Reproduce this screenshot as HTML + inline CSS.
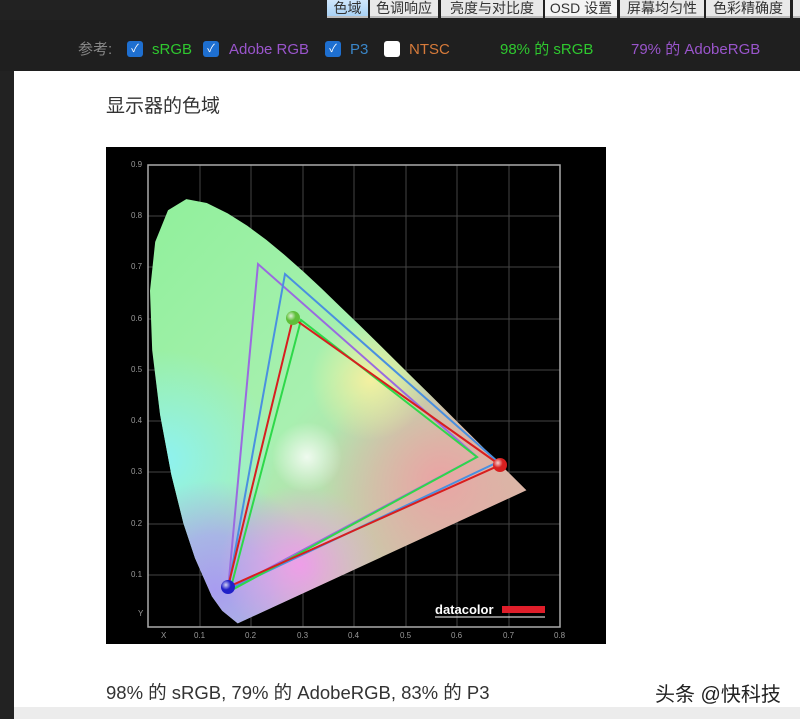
<!DOCTYPE html>
<html><head><meta charset="utf-8"><style>
*{margin:0;padding:0;box-sizing:border-box}
body{width:800px;height:719px;overflow:hidden;background:#222;font-family:"Liberation Sans","Noto Sans CJK SC",sans-serif;position:relative}
.tab{position:absolute;top:0;height:18px;background:#e9e9e9;color:#333;font-size:14px;line-height:16px;text-align:center;border-bottom:2px solid #bbb;overflow:hidden}
.row{position:absolute;top:40px;font-size:15px;line-height:20px}
.cb{position:absolute;top:41px;width:16px;height:16px;border-radius:3px;background:#1e6fd0;color:#fff;font-size:11px;text-align:center;line-height:16px}
.panel{position:absolute;left:14px;top:71px;width:786px;height:636px;background:#fff}
</style></head><body>
<div style="position:absolute;left:0;top:20px;width:800px;height:51px;background:#1f1f1f"></div>
<div class="tab" style="left:327px;width:41px;background:linear-gradient(#cfe6fb,#a9d2f5)">色域</div>
<div class="tab" style="left:370px;width:68px">色调响应</div>
<div class="tab" style="left:441px;width:102px">亮度与对比度</div>
<div class="tab" style="left:545px;width:72px;background:#f4f4f4">OSD 设置</div>
<div class="tab" style="left:620px;width:84px">屏幕均匀性</div>
<div class="tab" style="left:706px;width:84px">色彩精确度</div>
<div class="tab" style="left:793px;width:10px"></div>
<div class="row" style="left:78px;color:#888">参考:</div>
<div class="cb" style="left:127px">✓</div><div class="row" style="left:152px;color:#2fc82f">sRGB</div>
<div class="cb" style="left:203px">✓</div><div class="row" style="left:229px;color:#9a55cc">Adobe RGB</div>
<div class="cb" style="left:325px">✓</div><div class="row" style="left:350px;color:#3a86c8">P3</div>
<div class="cb" style="left:384px;background:#fff"></div><div class="row" style="left:409px;color:#d67a3a">NTSC</div>
<div class="row" style="left:500px;color:#2fc82f">98% 的 sRGB</div>
<div class="row" style="left:631px;color:#9a55cc">79% 的 AdobeRGB</div>
<div class="panel"></div>
<div style="position:absolute;left:106px;top:91px;font-size:19px;color:#333">显示器的色域</div>
<svg style="position:absolute;left:0;top:0" width="800" height="719">
<defs>
<clipPath id="cl"><path d="M237.7,623.4 L222.2,610.8 211.9,596.4 195,558.1 183.4,523.2 171.4,475 160.1,414.7 152.2,350.3 150,290.7 155.2,241.9 168,210.3 186.3,199.1 206.8,203 227.7,213.4 247.3,225.8 266.2,239.8 284.9,255.2 303.3,271.5 321.7,288.6 340.1,306.5 358.5,324.1 376.7,342 394.6,359.7 411.9,376.9 428.6,393.3 444.2,408.8 458.5,423 470.9,435.3 481.8,446.1 490.9,455 504.1,468.2 526.4,490.2 Z"/></clipPath>
<linearGradient id="base" x1="0" y1="0" x2="1" y2="1"><stop offset="0" stop-color="#8ff09a"/><stop offset="0.45" stop-color="#a8f0b0"/><stop offset="1" stop-color="#eaa4a4"/></linearGradient>
<radialGradient id="cy" cx="165" cy="460" r="110" gradientUnits="userSpaceOnUse"><stop offset="0" stop-color="#8ef2f0"/><stop offset="1" stop-color="#8ef2f0" stop-opacity="0"/></radialGradient>
<radialGradient id="bl" cx="215" cy="590" r="110" gradientUnits="userSpaceOnUse"><stop offset="0" stop-color="#a89cf0"/><stop offset="0.5" stop-color="#a8a8f0" stop-opacity=".8"/><stop offset="1" stop-color="#a8a8f0" stop-opacity="0"/></radialGradient>
<radialGradient id="mg" cx="300" cy="565" r="80" gradientUnits="userSpaceOnUse"><stop offset="0" stop-color="#ee9ee8"/><stop offset="1" stop-color="#ee9ee8" stop-opacity="0"/></radialGradient>
<radialGradient id="rd" cx="440" cy="480" r="120" gradientUnits="userSpaceOnUse"><stop offset="0" stop-color="#eaa4a4"/><stop offset="1" stop-color="#eaa4a4" stop-opacity="0"/></radialGradient>
<radialGradient id="ye" cx="370" cy="380" r="60" gradientUnits="userSpaceOnUse"><stop offset="0" stop-color="#f4f0a0"/><stop offset="1" stop-color="#f4f0a0" stop-opacity="0"/></radialGradient>
<radialGradient id="wh" cx="307" cy="457" r="35" gradientUnits="userSpaceOnUse"><stop offset="0" stop-color="#fff" stop-opacity=".8"/><stop offset="1" stop-color="#fff" stop-opacity="0"/></radialGradient>
<radialGradient id="ball" cx=".35" cy=".35" r=".7"><stop offset="0" stop-color="#fff" stop-opacity=".8"/><stop offset=".5" stop-color="#fff" stop-opacity="0"/></radialGradient>
</defs>
<rect x="106" y="147" width="500" height="497" fill="#000"/>
<g stroke="#444" stroke-width="1">
<line x1="200" y1="165" x2="200" y2="627"/><line x1="251" y1="165" x2="251" y2="627"/><line x1="303" y1="165" x2="303" y2="627"/><line x1="354" y1="165" x2="354" y2="627"/><line x1="406" y1="165" x2="406" y2="627"/><line x1="457" y1="165" x2="457" y2="627"/><line x1="509" y1="165" x2="509" y2="627"/>
<line x1="148" y1="216" x2="560" y2="216"/><line x1="148" y1="267" x2="560" y2="267"/><line x1="148" y1="319" x2="560" y2="319"/><line x1="148" y1="370" x2="560" y2="370"/><line x1="148" y1="421" x2="560" y2="421"/><line x1="148" y1="472" x2="560" y2="472"/><line x1="148" y1="524" x2="560" y2="524"/><line x1="148" y1="575" x2="560" y2="575"/>
</g>
<rect x="148" y="165" width="412" height="462" fill="none" stroke="#aaa" stroke-width="1.5"/>
<g fill="#999" font-size="8" font-family="Liberation Sans">
<text x="131" y="167">0.9</text><text x="131" y="218">0.8</text><text x="131" y="269">0.7</text><text x="131" y="321">0.6</text><text x="131" y="372">0.5</text><text x="131" y="423">0.4</text><text x="131" y="474">0.3</text><text x="131" y="526">0.2</text><text x="131" y="577">0.1</text><text x="138" y="616">Y</text>
<text x="161" y="638">X</text><text x="194" y="638">0.1</text><text x="245" y="638">0.2</text><text x="297" y="638">0.3</text><text x="348" y="638">0.4</text><text x="400" y="638">0.5</text><text x="451" y="638">0.6</text><text x="503" y="638">0.7</text><text x="554" y="638">0.8</text>
</g>
<g clip-path="url(#cl)">
<rect x="140" y="190" width="400" height="440" fill="url(#base)"/>
<rect x="140" y="190" width="400" height="440" fill="url(#cy)"/>
<rect x="140" y="190" width="400" height="440" fill="url(#rd)"/>
<rect x="140" y="190" width="400" height="440" fill="url(#bl)"/>
<rect x="140" y="190" width="400" height="440" fill="url(#mg)"/>
<rect x="140" y="190" width="400" height="440" fill="url(#ye)"/>
<rect x="140" y="190" width="400" height="440" fill="url(#wh)"/>
</g>
<g fill="none" stroke-width="2">
<polygon points="477,457 258,264 228,590" stroke="#9a6ae0"/>
<polygon points="498,462 285,274 228,590" stroke="#4a90e0"/>
<polygon points="477,457 301,320 230,591" stroke="#2ed84a"/>
<polygon points="500,465 293,318 228,587" stroke="#d81e1e"/>
</g>
<circle cx="293" cy="318" r="7" fill="#5fbf3a"/><circle cx="293" cy="318" r="7" fill="url(#ball)"/>
<circle cx="500" cy="465" r="7" fill="#d82020"/><circle cx="500" cy="465" r="7" fill="url(#ball)"/>
<circle cx="228" cy="587" r="7" fill="#2020c8"/><circle cx="228" cy="587" r="7" fill="url(#ball)"/>
<text x="435" y="614" fill="#fff" font-size="13" font-weight="bold" font-family="Liberation Sans">datacolor</text>
<rect x="502" y="606" width="43" height="7" fill="#e01e2a"/>
<line x1="435" y1="617" x2="545" y2="617" stroke="#fff" stroke-width="1"/>
</svg>
<div style="position:absolute;left:106px;top:679px;font-size:18.5px;color:#333">98% 的 sRGB, 79% 的 AdobeRGB, 83% 的 P3</div>
<div style="position:absolute;left:655px;top:678px;font-size:20px;color:#222">头条 @快科技</div>
<div style="position:absolute;left:14px;top:707px;width:786px;height:12px;background:#ececec"></div>
</body></html>
